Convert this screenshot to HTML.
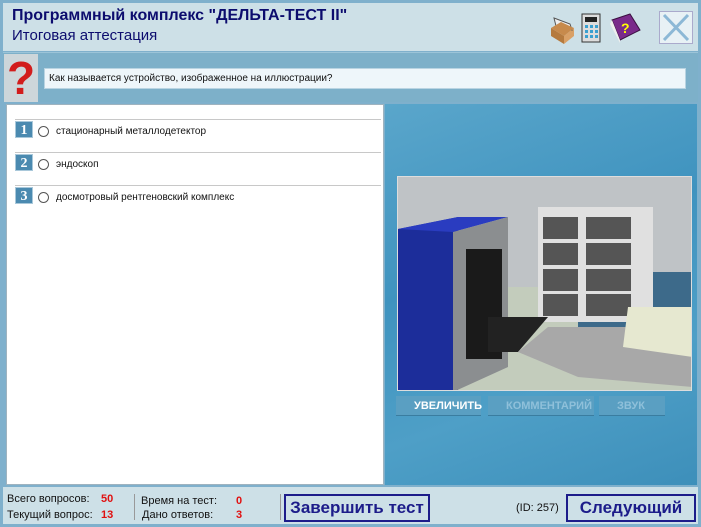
<!DOCTYPE html>
<html><head><meta charset="utf-8"><style>
*{margin:0;padding:0;box-sizing:border-box}
body{width:701px;height:527px;background:#7fb0cc;font-family:"Liberation Sans","DejaVu Sans",sans-serif;position:relative;overflow:hidden}
.abs{position:absolute}
.hdr{left:3px;top:3px;width:695px;height:48px;background:#cde0e7}
.t1{left:12px;top:7px;font-size:16px;font-weight:bold;color:#0c0c6e}
.t2{left:12px;top:27px;font-size:15px;color:#0c0c6e}
.band{left:3px;top:52px;width:695px;height:50px;background:#7db0c9;border-top:1px solid #9cc4d8}
.qm{left:4px;top:54px;width:34px;height:48px;background:#cdd6da;color:#d21c1c;font:bold 46px "Liberation Sans",sans-serif;text-align:center;line-height:48px}
.qbox{left:44px;top:68px;width:642px;height:21px;background:#eef6fa;border:1px solid #b9d4e2;font-size:10px;line-height:19px;padding-left:4px;color:#111}
.left{left:6px;top:104px;width:378px;height:381px;background:#fff;border:1px solid #9fb3bf}
.right{left:385px;top:104px;width:312px;height:381px;background:linear-gradient(160deg,#5aa6cb 0%,#3f93bf 40%,#4e9fc7 70%,#3d8fba 100%)}
.row{position:absolute;left:8px;width:366px;height:28px;border-top:1px solid #c8c8c8;font-size:10px;color:#111}
.num{position:absolute;left:0px;top:1px;width:18px;height:17px;background:#4b8ab0;color:#fff;font:bold 14px "Liberation Serif",serif;text-align:center;line-height:17px;border:1px solid #a9c8da}
.rad{position:absolute;left:23px;top:6px;width:11px;height:11px;border:1px solid #555;border-radius:50%;background:#fff}
.lbl{position:absolute;left:41px;top:6px}
.img{left:397px;top:176px;width:295px;height:215px;background:#c9cdd0;overflow:hidden;border:1px solid #ddd}
.btn{top:396px;height:20px;background:#5a9fc2;border-bottom:1px solid #3a7da0;color:#fff;font-size:11px;font-weight:bold;line-height:20px;padding-left:18px}
.ft{left:3px;top:487px;width:695px;height:37px;background:#cde0e7}
.fl{font-size:11px;color:#111}
.red{color:#e01010;font-weight:bold;font-size:11px}
.bigb{border:2px solid #1c1c8a;background:#cde0e7;color:#1c1c8a;font-weight:bold;font-size:17px;text-align:center;line-height:24px}
</style></head><body>
<div class="abs hdr"></div>
<div class="abs t1">Программный комплекс "ДЕЛЬТА-ТЕСТ II"</div>
<div class="abs t2">Итоговая аттестация</div>
<svg class="abs" style="left:548px;top:12px" width="100" height="32">
<g transform="translate(0,2)"><polygon points="3,14 16,22 16,30 3,22" fill="#b57a3e"/><polygon points="16,22 26,14 26,22 16,30" fill="#d9a066"/><polygon points="6,4 22,10 24,16 8,12" fill="#eee" stroke="#555"/><polygon points="3,14 16,22 26,14 13,8" fill="#c78a4c"/></g>
<rect x="34" y="2" width="18" height="28" fill="#ddd" stroke="#333"/><rect x="37" y="5" width="12" height="5" fill="#222"/>
<g fill="#3aa0d0"><rect x="37" y="13" width="3" height="3"/><rect x="42" y="13" width="3" height="3"/><rect x="47" y="13" width="3" height="3"/><rect x="37" y="18" width="3" height="3"/><rect x="42" y="18" width="3" height="3"/><rect x="47" y="18" width="3" height="3"/><rect x="37" y="23" width="3" height="3"/><rect x="42" y="23" width="3" height="3"/><rect x="47" y="23" width="3" height="3"/></g>
<polygon points="64,8 82,2 92,18 72,28" fill="#7a2a8a" stroke="#3a1040"/><polygon points="64,8 72,28 72,31 62,12" fill="#eee"/><text x="73" y="21" font-size="14" font-weight="bold" fill="#ff0">?</text>
</svg>
<div class="abs" style="left:659px;top:11px;width:34px;height:33px;background:#e8f1f5;border:1px solid #aac">
<svg width="32" height="31"><path d="M4 3L28 28M28 3L4 28" stroke="#8cb8d6" stroke-width="3"/></svg></div>
<div class="abs band"></div>
<div class="abs qm">?</div>
<div class="abs qbox">Как называется устройство, изображенное на иллюстрации?</div>
<div class="abs left">
<div class="row" style="top:14px"><div class="num">1</div><div class="rad"></div><div class="lbl">стационарный металлодетектор</div></div>
<div class="row" style="top:47px"><div class="num">2</div><div class="rad"></div><div class="lbl">эндоскоп</div></div>
<div class="row" style="top:80px"><div class="num">3</div><div class="rad"></div><div class="lbl">досмотровый рентгеновский комплекс</div></div>
</div>
<div class="abs right"></div>
<div class="abs img">
<svg width="295" height="215">
<rect width="295" height="215" fill="#bfc3c6"/>
<rect x="0" y="110" width="295" height="105" fill="#c3ccbc"/>
<rect x="180" y="95" width="115" height="60" fill="#3d6a8a"/>
<rect x="140" y="30" width="115" height="115" fill="#e0e0e0"/>
<g fill="#555"><rect x="145" y="40" width="35" height="22"/><rect x="145" y="66" width="35" height="22"/><rect x="145" y="92" width="35" height="22"/><rect x="145" y="117" width="35" height="22"/><rect x="188" y="40" width="45" height="22"/><rect x="188" y="66" width="45" height="22"/><rect x="188" y="92" width="45" height="22"/><rect x="188" y="117" width="45" height="22"/></g>
<polygon points="0,52 60,40 60,215 0,215" fill="#1c2d9a"/>
<polygon points="0,52 60,40 110,40 55,55" fill="#2a3cc0"/>
<polygon points="55,55 110,40 110,190 55,215" fill="#8b8e90"/>
<rect x="68" y="72" width="36" height="110" fill="#1a1a1a"/>
<polygon points="90,140 150,140 120,175 90,175" fill="#222"/>
<polygon points="120,175 150,150 295,150 295,210 180,200" fill="#a8a8a8"/>
<polygon points="230,130 295,130 295,180 225,170" fill="#e6e8d0"/>
</svg></div>
<div class="abs btn" style="left:396px;width:85px">УВЕЛИЧИТЬ</div>
<div class="abs btn" style="left:488px;width:106px;color:#8fc0da">КОММЕНТАРИЙ</div>
<div class="abs btn" style="left:599px;width:66px;color:#8fc0da">ЗВУК</div>
<div class="abs ft"></div>
<div class="abs fl" style="left:7px;top:493px">Всего вопросов:</div><div class="abs red" style="left:101px;top:493px">50</div>
<div class="abs fl" style="left:7px;top:509px">Текущий вопрос:</div><div class="abs red" style="left:101px;top:509px">13</div>
<div class="abs" style="left:134px;top:494px;width:1px;height:26px;background:#999"></div>
<div class="abs fl" style="left:141px;top:495px">Время на тест:</div><div class="abs red" style="left:236px;top:495px">0</div>
<div class="abs fl" style="left:142px;top:509px">Дано ответов:</div><div class="abs red" style="left:236px;top:509px">3</div>
<div class="abs" style="left:280px;top:494px;width:1px;height:26px;background:#999"></div>
<div class="abs bigb" style="left:284px;top:494px;width:146px;height:28px">Завершить тест</div>
<div class="abs fl" style="left:516px;top:502px">(ID: 257)</div>
<div class="abs bigb" style="left:566px;top:494px;width:130px;height:28px">Следующий</div>
</body></html>
